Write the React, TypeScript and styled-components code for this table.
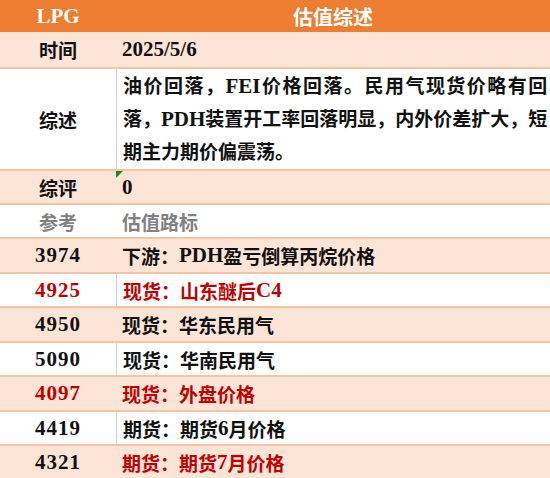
import React from 'react';
import styled, { createGlobalStyle } from 'styled-components';

const GlobalStyle = createGlobalStyle`
  html, body {
    margin: 0;
    padding: 0;
    background: #ffffff;
  }
  body {
    font-family: 'Liberation Serif', 'Noto Sans CJK SC', serif;
    font-weight: bold;
    font-size: 19px;
  }
`;

const Sheet = styled.div`
  width: 550px;
  height: 478px;
  overflow: hidden;
  background: #ffffff;
`;

const Row = styled.div<{ $bg?: string; $h: number; $line?: boolean }>`
  display: grid;
  grid-template-columns: 116px 1fr;
  box-sizing: border-box;
  height: ${(p) => p.$h}px;
  background: ${(p) => p.$bg || '#ffffff'};
  border-top: ${(p) => (p.$line ? '2px solid #f6c4a2' : 'none')};
`;

const HeadRow = styled(Row)`
  background: #ed7d31;
  color: #ffffff;
  font-size: 20px;
`;

const Label = styled.div<{ $color?: string }>`
  display: flex;
  align-items: center;
  justify-content: center;
  color: ${(p) => p.$color || '#111111'};
`;

const Num = styled(Label)`
  letter-spacing: 1px;
  font-size: 21px;
`;

const Value = styled.div<{ $color?: string; $divider?: boolean }>`
  position: relative;
  display: flex;
  align-items: center;
  padding-left: 6px;
  white-space: pre;
  color: ${(p) => p.$color || '#111111'};
  border-left: ${(p) => (p.$divider ? '1px solid #d4d4d4' : 'none')};
`;

const Latin = styled.span`
  font-size: 21px;
`;

const HeadTitle = styled.div`
  display: flex;
  align-items: center;
  justify-content: center;
`;

const Summary = styled.div`
  display: flex;
  flex-direction: column;
  justify-content: center;
  padding: 0 5px 0 6px;
  border-left: 1px solid #d4d4d4;
  color: #111111;
`;

const Line = styled.div<{ $fill?: boolean }>`
  height: 33px;
  line-height: 33px;
  white-space: nowrap;
  text-align: justify;
  text-align-last: ${(p) => (p.$fill ? 'justify' : 'left')};
`;

const Flag = styled.span`
  position: absolute;
  left: 0;
  top: 0;
  width: 0;
  height: 0;
  border-top: 7px solid #1a8a1a;
  border-right: 7px solid transparent;
`;

const PEACH = '#fce4d6';
const RED = '#c00000';

// split mixed text so the latin bits get the larger serif size
const Mixed = ({ text }: { text: string }) => (
  <>
    {text.split(/([A-Za-z0-9/]+)/).map((part, i) =>
      /^[A-Za-z0-9/]+$/.test(part) ? <Latin key={i}>{part}</Latin> : part,
    )}
  </>
);

type Item = { num: string; text: string; numColor?: string; textColor?: string };

const items: Item[] = [
  { num: '3974', text: '下游：PDH盈亏倒算丙烷价格' },
  { num: '4925', text: '现货：山东醚后C4', numColor: RED, textColor: RED },
  { num: '4950', text: '现货：华东民用气' },
  { num: '5090', text: '现货：华南民用气' },
  { num: '4097', text: '现货：外盘价格', numColor: RED, textColor: RED },
  { num: '4419', text: '期货：期货6月价格' },
  { num: '4321', text: '期货：期货7月价格', textColor: RED },
];

const heights = [35, 34, 35, 34, 35, 34, 35];

export default function App() {
  return (
    <>
      <GlobalStyle />
      <Sheet>
        <HeadRow $h={32}>
          <Label $color="#ffffff">
            <Latin>LPG</Latin>
          </Label>
          <HeadTitle>估值综述</HeadTitle>
        </HeadRow>
        <Row $h={35} $bg={PEACH}>
          <Label>时间</Label>
          <Value>
            <Latin>2025/5/6</Latin>
          </Value>
        </Row>
        <Row $h={102} $line>
          <Label>综述</Label>
          <Summary>
            <Line $fill>
              <Mixed text="油价回落，FEI价格回落。民用气现货价略有回" />
            </Line>
            <Line $fill>
              <Mixed text="落，PDH装置开工率回落明显，内外价差扩大，短" />
            </Line>
            <Line>期主力期价偏震荡。</Line>
          </Summary>
        </Row>
        <Row $h={34} $bg={PEACH} $line>
          <Label>综评</Label>
          <Value>
            <Flag />
            <Latin>0</Latin>
          </Value>
        </Row>
        <Row $h={34} $line>
          <Label $color="#808080">参考</Label>
          <Value $color="#808080">估值路标</Value>
        </Row>
        {items.map((it, i) => (
          <Row key={it.num} $h={heights[i]} $bg={i % 2 === 0 ? PEACH : undefined} $line>
            <Num $color={it.numColor}>{it.num}</Num>
            <Value $color={it.textColor} $divider={i % 2 === 1}>
              <Mixed text={it.text} />
            </Value>
          </Row>
        ))}
      </Sheet>
    </>
  );
}
